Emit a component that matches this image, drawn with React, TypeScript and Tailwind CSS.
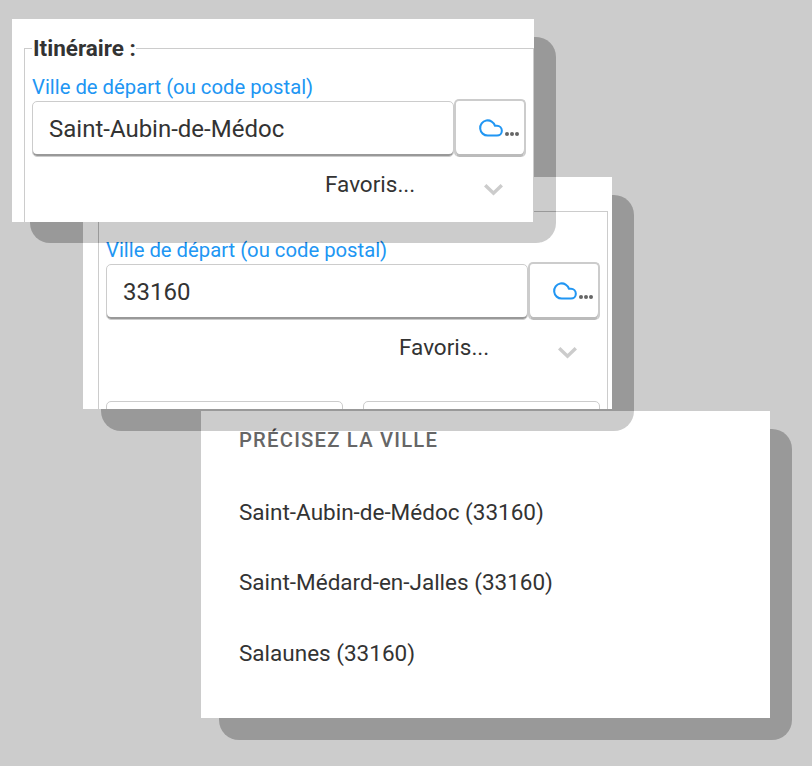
import { Cloud } from 'lucide-react';

function RouteForm({ city }: { city: string }) {
  return (
    <fieldset className="h-[400px] border border-[#ccc] px-[7px] pb-4 pt-0">
      <legend className="pl-px text-[22.5px] leading-[24px] font-bold text-[#333]">Itinéraire :</legend>
      <div className="mt-[15px] text-[20.25px] leading-[24px] text-[#2196f3]">Ville de départ (ou code postal)</div>
      <div className="flex items-end">
        <div className="flex h-[56px] w-[422px] items-center rounded-[5px] border border-[#ccc] pl-4 text-[24px] text-[#333] shadow-[inset_0_-2px_0_#999]">
          {city}
        </div>
        <button className="flex h-[58px] w-[72px] items-center justify-end rounded-[5px] border-2 border-b-0 border-[#ccc] pb-[3px] pr-[5px] shadow-[inset_0_-3px_0_#bbb]">
          <Cloud size={26} strokeWidth={1.9} className="text-[#2196f3]" />
          <span className="ml-[1px] mt-[12px] flex gap-px">
            <span className="h-[4px] w-[4px] rounded-full bg-[#666]" />
            <span className="h-[4px] w-[4px] rounded-full bg-[#666]" />
            <span className="h-[4px] w-[4px] rounded-full bg-[#666]" />
          </span>
        </button>
      </div>
      <div className="flex items-start pt-[14px]">
        <span className="ml-[293px] text-[22.5px] leading-[26px] text-[#333]">Favoris...</span>
        <svg width="19" height="12" viewBox="0 0 19 12" className="ml-[69px] mt-[13px] text-[#ccc]">
          <polyline points="1.2,1.2 9.5,9.2 17.8,1.2" fill="none" stroke="currentColor" strokeWidth="3.4" />
        </svg>
      </div>
      <div className="mt-[41px] flex gap-5">
        <div className="h-[60px] w-[237px] rounded-[5px] border border-[#ccc]" />
        <div className="h-[60px] w-[237px] rounded-[5px] border border-[#ccc]" />
      </div>
    </fieldset>
  );
}

export default function App() {
  return (
    <div className="relative h-[766px] w-[812px] overflow-hidden bg-[#ccc] font-['Roboto',sans-serif]">
      {/* shadows subtract a fixed amount, so each one sits over the card below it */}
      <div className="absolute left-[219px] top-[429px] h-[311px] w-[573px] rounded-[20px] bg-[#333] mix-blend-difference" />
      <div className="absolute left-[201px] top-[411px] h-[307px] w-[569px] bg-white pl-[38px]">
        <div className="pt-[17px] text-[20.25px] leading-[24px] font-medium tracking-[1.2px] text-[#666]">PRÉCISEZ LA VILLE</div>
        <ul className="mt-[47px] flex flex-col gap-[44.4px] text-[22.5px] leading-[26px] text-[#333]">
          <li>Saint-Aubin-de-Médoc (33160)</li>
          <li>Saint-Médard-en-Jalles (33160)</li>
          <li>Salaunes (33160)</li>
        </ul>
      </div>

      <div className="absolute left-[101px] top-[195px] h-[236px] w-[533px] rounded-[20px] bg-[#333] mix-blend-difference" />
      <div className="absolute left-[83px] top-[177px] h-[232px] w-[529px] overflow-hidden bg-white pl-[15px] pr-[5px] pt-[22px]">
        <RouteForm city="33160" />
      </div>

      <div className="absolute left-[30px] top-[37px] h-[206px] w-[526px] rounded-[20px] bg-[#333] mix-blend-difference" />
      <div className="absolute left-[12px] top-[19px] h-[203px] w-[522px] overflow-hidden bg-white pl-[12px] pr-px pt-[17px]">
        <RouteForm city="Saint-Aubin-de-Médoc" />
      </div>
    </div>
  );
}
